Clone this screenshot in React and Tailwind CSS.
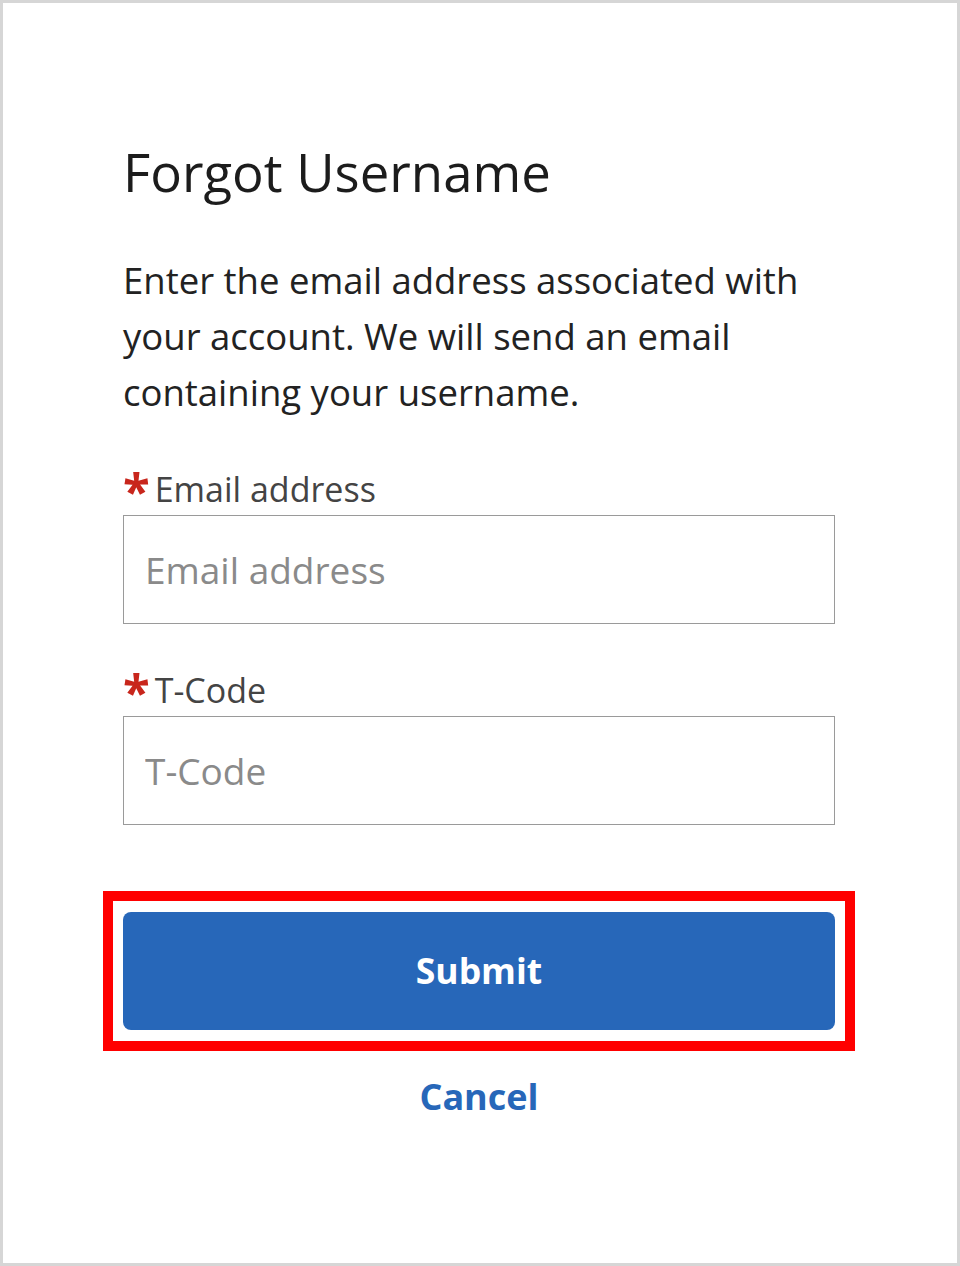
import React from 'react'

const font = { fontFamily: '"Open Sans", "Noto Sans", sans-serif' }

function Field({ label, placeholder }) {
  return (
    <div className="flex flex-col">
      <label className="block text-[34px] leading-[40px] text-[#444] whitespace-nowrap">
        <span className="relative top-[7px] mr-[5px] text-[49px] leading-[40px] font-bold text-[#c8261c]">*</span>
        {label}
      </label>
      <input
        type="text"
        placeholder={placeholder}
        className="mt-[6px] h-[109px] w-full border border-[#9a9a9a] bg-white pl-[21px] text-[37px] text-[#333] placeholder:text-[#8a8a8a] outline-none"
        style={font}
      />
    </div>
  )
}

export default function App() {
  return (
    <div
      className="w-[960px] h-[1266px] border-[3px] border-[#d6d6d6] bg-white pl-[120px] pr-[122px] pt-[137px]"
      style={font}
    >
      <h1 className="text-[52.7px] leading-[64px] text-[#1c1c1c] font-normal">Forgot Username</h1>

      <p className="mt-[48px] text-[36.5px] leading-[56px] text-[#222]">
        Enter the email address associated with your account. We will send an email containing your username.
      </p>

      <div className="mt-[43px]">
        <Field label="Email address" placeholder="Email address" />
      </div>

      <div className="mt-[40px]">
        <Field label="T-Code" placeholder="T-Code" />
      </div>

      {/* highlighted submit */}
      <div className="mt-[66px] -mx-[20px] border-[10px] border-[#ff0000] px-[10px] py-[11px]">
        <button className="h-[118px] w-full rounded-[8px] bg-[#2767b9] text-white text-[35.5px] font-bold">
          Submit
        </button>
      </div>

      <div className="mt-[22px] flex justify-center">
        <button className="text-[36px] font-bold text-[#2767b9] leading-[48px]">Cancel</button>
      </div>
    </div>
  )
}
